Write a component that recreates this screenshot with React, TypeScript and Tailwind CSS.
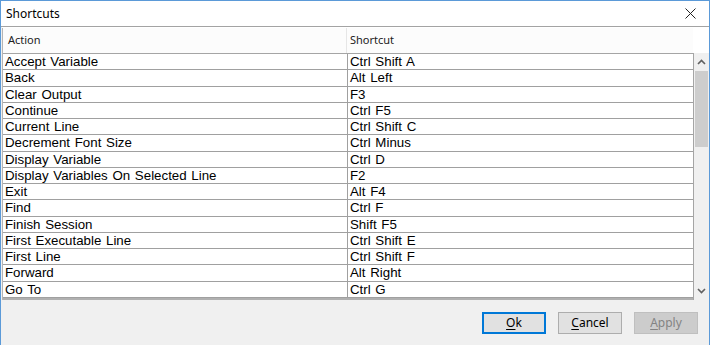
import { Fragment } from "react";

const shortcuts: [string, string][] = [
  ["Accept Variable", "Ctrl Shift A"],
  ["Back", "Alt Left"],
  ["Clear Output", "F3"],
  ["Continue", "Ctrl F5"],
  ["Current Line", "Ctrl Shift C"],
  ["Decrement Font Size", "Ctrl Minus"],
  ["Display Variable", "Ctrl D"],
  ["Display Variables On Selected Line", "F2"],
  ["Exit", "Alt F4"],
  ["Find", "Ctrl F"],
  ["Finish Session", "Shift F5"],
  ["First Executable Line", "Ctrl Shift E"],
  ["First Line", "Ctrl Shift F"],
  ["Forward", "Alt Right"],
  ["Go To", "Ctrl G"],
];

function Chevron({ up }: { up?: boolean }) {
  return (
    <svg width="9" height="6" viewBox="0 0 9 6" className="text-[#606060]">
      <path
        d={up ? "M1 5 L4.5 1.5 L8 5" : "M1 1 L4.5 4.5 L8 1"}
        fill="none"
        stroke="currentColor"
        strokeWidth="1.6"
      />
    </svg>
  );
}

export default function App() {
  return (
    <div className="w-[710px] h-[345px] flex flex-col bg-[#f0f0f0] border-x border-t border-[#5b9ad8] overflow-hidden font-['Liberation_Sans',Arial,sans-serif]">
      {/* title bar */}
      <div className="h-[26px] shrink-0 bg-white flex items-center justify-between pl-[5px] pr-[13px] border-b border-[#a3a3a3]">
        <span className="text-[12px] text-black font-['Noto_Sans',sans-serif]">Shortcuts</span>
        <svg width="11" height="11" viewBox="0 0 11 11">
          <path d="M0.5 0.5 L10.5 10.5 M10.5 0.5 L0.5 10.5" stroke="#222" strokeWidth="1" />
        </svg>
      </div>

      {/* list */}
      <div className="bg-white pt-px ml-px">
        <div className="flex border-l border-[#b5b5b5]">
          <div className="w-[691px]">
            <div className="h-[25px] flex bg-[#fcfcfc] text-[11px] text-[#222] font-['Noto_Sans',sans-serif]">
              <div className="w-[344px] flex items-center pl-[5px] border-r border-[#e6e6e6]">Action</div>
              <div className="flex-1 flex items-center pl-[3px]">Shortcut</div>
            </div>
            <div className="grid grid-cols-[344px_1fr] border-t border-[#a5a5a5] border-b-2 border-b-[#b0b0b0] text-[13.3px] text-black">
              {shortcuts.map(([action, key]) => (
                <Fragment key={action}>
                  <div className="h-[16.27px] leading-[15px] pl-[2px] border-b border-[#a0a0a0] whitespace-nowrap [word-spacing:1px]">{action}</div>
                  <div className="h-[16.27px] leading-[15px] pl-[2px] border-b border-l border-[#a0a0a0] whitespace-nowrap [word-spacing:1px]">{key}</div>
                </Fragment>
              ))}
            </div>
          </div>
          <div className="w-[16px] bg-[#f0f0f0] flex flex-col border-l border-[#a5a5a5] mt-[25px]">
            <div className="h-[18px] flex items-center justify-center">
              <Chevron up />
            </div>
            <div className="h-[76px] mx-[1px] bg-[#cdcdcd]" />
            <div className="flex-1" />
            <div className="h-[17px] flex items-center justify-center">
              <Chevron />
            </div>
          </div>
        </div>
      </div>

      {/* buttons */}
      <div className="flex-1 flex justify-end items-start gap-[12px] pt-[12px] pr-[11px] text-[12px] font-['Noto_Sans',sans-serif]">
        <button className="w-[64px] h-[22px] bg-[#e1e1e1] border-2 border-[#0078d7] text-black leading-none">
          <span className="underline underline-offset-2">O</span>k
        </button>
        <button className="w-[64px] h-[22px] bg-[#e1e1e1] border border-[#adadad] text-black leading-none">
          <span className="underline underline-offset-2">C</span>ancel
        </button>
        <button className="w-[64px] h-[22px] bg-[#cccccc] border border-[#bfbfbf] text-[#838383] leading-none">
          <span className="underline underline-offset-2">A</span>pply
        </button>
      </div>
    </div>
  );
}
